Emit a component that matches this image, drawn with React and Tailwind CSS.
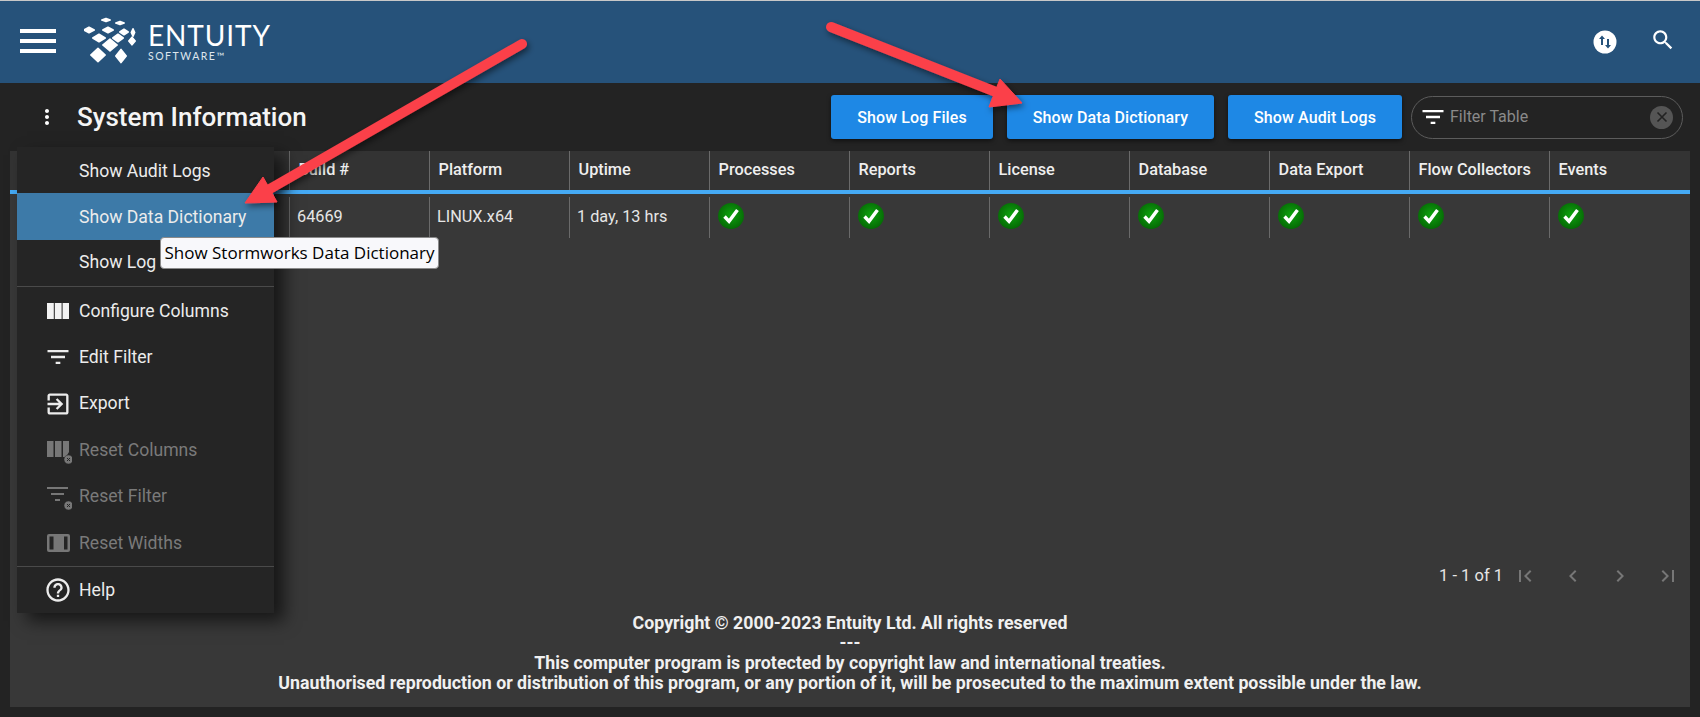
import React from 'react'

const roboto = 'font-["Roboto",sans-serif]'

const Mui = ({ d, className }) => (
  <svg viewBox="0 0 24 24" fill="currentColor" className={className}>
    <path d={d} />
  </svg>
)

const FILTER = 'M10 18h4v-2h-4v2zM3 6v2h18V6H3zm3 7h12v-2H6v2z'
const EXPORT = 'M10.09 15.59L11.5 17l5-5-5-5-1.41 1.41L12.67 11H3v2h9.67l-2.58 2.59zM19 3H5c-1.11 0-2 .9-2 2v4h2V5h14v14H5v-4H3v4c0 1.1.89 2 2 2h14c1.1 0 2-.9 2-2V5c0-1.1-.9-2-2-2z'
const HELP = 'M11 18h2v-2h-2v2zm1-16C6.48 2 2 6.48 2 12s4.48 10 10 10 10-4.48 10-10S17.52 2 12 2zm0 18c-4.41 0-8-3.59-8-8s3.59-8 8-8 8 3.59 8 8-3.59 8-8 8zm0-14c-2.21 0-4 1.79-4 4h2c0-1.1.9-2 2-2s2 .9 2 2c0 2-3 1.75-3 5h2c0-2.25 3-2.5 3-5 0-2.21-1.79-4-4-4z'
const SEARCH = 'M15.5 14h-.79l-.28-.27C15.41 12.59 16 11.11 16 9.5 16 5.91 13.09 3 9.5 3S3 5.91 3 9.5 5.91 16 9.5 16c1.61 0 3.09-.59 4.23-1.57l.27.28v.79l5 4.99L20.49 19l-4.99-5zm-6 0C7.01 14 5 11.99 5 9.5S7.01 5 9.5 5 14 7.01 14 9.5 11.99 14 9.5 14z'
const KEBAB = 'M12 8c1.1 0 2-.9 2-2s-.9-2-2-2-2 .9-2 2 .9 2 2 2zm0 2c-1.1 0-2 .9-2 2s.9 2 2 2 2-.9 2-2-.9-2-2-2zm0 6c-1.1 0-2 .9-2 2s.9 2 2 2 2-.9 2-2-.9-2-2-2z'

const Badge = () => (
  <g>
    <circle cx="24.5" cy="23.5" r="4.500" fill="#777" stroke="#252525" strokeWidth="0.5" />
    <path d="M23 22l3 3M26 22l-3 3" stroke="#252525" strokeWidth="1" />
  </g>
)

const ColumnsIcon = () => (
  <svg viewBox="0 0 28 28" className="w-7 h-7" fill="#f2f2f2">
    <path d="M3 6h6.800v16H3zM10.800 6h6.800v16h-6.800zM18.600 6h6.400v16h-6.400z" />
  </svg>
)

const ResetColumnsIcon = () => (
  <svg viewBox="0 0 28 28" className="w-7 h-7">
    <path d="M3 5h6.500v16H3zM11 5h6.500v16H11zM19 5h6v11l-3 5h-3z" fill="#777" />
    <Badge />
  </svg>
)

const ResetFilterIcon = () => (
  <svg viewBox="0 0 28 28" className="w-7 h-7">
    <path d="M3 5h21v2H3zM7 11h13v2H7zM11 17h5v2h-5z" fill="#777" />
    <Badge />
  </svg>
)

const ResetWidthsIcon = () => (
  <svg viewBox="0 0 28 28" className="w-7 h-7">
    <rect x="3" y="5" width="23" height="18" rx="2" fill="#777" />
    <path d="M5.500 7.500h4v13h-4zM20 7.500h3.500v13H20z" fill="#252525" />
  </svg>
)

const Check = () => (
  <svg viewBox="0 0 26 26" className="w-[28px] h-[28px]">
    <defs>
      <radialGradient id="okGrad" cx="50%" cy="45%" r="55%">
        <stop offset="0%" stopColor="#0ea30e" />
        <stop offset="100%" stopColor="#056a05" />
      </radialGradient>
    </defs>
    <circle cx="13" cy="13" r="12" fill="url(#okGrad)" />
    <path d="M7 13.500l4.200 4.500 7.800-10.500" fill="none" stroke="#fff" strokeWidth="3.200" />
  </svg>
)

const Logo = () => {
  // each mark: centre, half width, half height
  const marks = [
    [106, 21, 5, 2.4], [120, 24, 5, 2.4], [89, 31, 6, 3.6], [108, 31, 6, 3.6], [124, 33, 5, 3.6],
    [99, 39, 7, 4.6], [118, 39, 6, 4.6], [133, 33.500, 2.500, 4.5], [132, 42, 4, 4.6],
    [110, 46, 8, 6.6], [98, 56, 8, 7.4], [121, 57, 6, 7.4],
  ]
  return (
    <div className="flex items-start">
      <svg viewBox="84 16 54 52" className="w-[54px] h-[52px] shrink-0" fill="#fff" stroke="#fff" strokeWidth="1.600" strokeLinejoin="round">
        {marks.map(([x, y, w, h]) => (
          <path key={`${x}-${y}`} d={`M${x - w + 0.8} ${y}L${x} ${y - h + 0.8}L${x + w - 0.8} ${y}L${x} ${y + h - 0.8}Z`} />
        ))}
      </svg>
      <div className="ml-[10px] flex flex-col text-white font-['Lato',sans-serif]">
        <span className="text-[28px] leading-[28px] font-normal mt-[6px] tracking-[0.9px]">ENTUITY</span>
        <span className="text-[10.500px] leading-[12px] mt-[1px] tracking-[1.500px] text-[#dfe7ee]">SOFTWARE™</span>
      </div>
    </div>
  )
}

const Header = () => (
  <header className="h-[82px] shrink-0 bg-[#26527a] flex items-center pl-[20px] pr-[24px]">
    <div className="flex flex-col gap-[5.500px] w-[36px] -mt-[2px]">
      <span className="h-[4.500px] bg-white" />
      <span className="h-[4.500px] bg-white" />
      <span className="h-[4.500px] bg-white" />
    </div>
    <div className="ml-[28px] -mt-[2px]"><Logo /></div>
    <div className="ml-auto flex items-center gap-[33px]">
      <svg viewBox="0 0 24 24" className="w-[24px] h-[24px]">
        <circle cx="12" cy="12" r="11.500" fill="#fff" />
        <path d="M9 5.500l-3 3.500h2v6h2V9h2zM15 18.500l3-3.500h-2V9h-2v6h-2z" fill="#26527a" />
      </svg>
      <Mui d={SEARCH} className="w-[26px] h-[26px] text-white -mt-[4px]" />
    </div>
  </header>
)

const Toolbar = () => (
  <div className="h-[68px] shrink-0 flex items-center pl-[35px] pr-[17px]">
    <Mui d={KEBAB} className="w-6 h-6 text-white" />
    <h1 className="ml-[18px] text-[26px] leading-[32px] font-medium text-[#f5f5f5]">System Information</h1>
    <div className="ml-auto flex items-center">
      <button className="w-[162px] h-[44px] pt-[1px] rounded-[3px] bg-[#1e88e5] text-white text-[16px] tracking-[0.12px] font-medium shadow-[0_2px_4px_rgba(0,0,0,0.5)]">Show Log Files</button>
      <button className="ml-[14px] w-[207px] h-[44px] pt-[1px] rounded-[3px] bg-[#1e88e5] text-white text-[16px] tracking-[0.12px] font-medium shadow-[0_2px_4px_rgba(0,0,0,0.5)]">Show Data Dictionary</button>
      <button className="ml-[14px] w-[174px] h-[44px] pt-[1px] rounded-[3px] bg-[#1e88e5] text-white text-[16px] tracking-[0.12px] font-medium shadow-[0_2px_4px_rgba(0,0,0,0.5)]">Show Audit Logs</button>
      <div className="ml-[9px] w-[272px] h-[43px] rounded-full border border-[#5c5c5c] flex items-center pl-[7px] pr-[9px]">
        <Mui d={FILTER} className="w-[28px] h-[28px] text-white" />
        <span className="ml-[3px] text-[16px] text-[#8a8a8a]">Filter Table</span>
        <span className="ml-auto w-[23px] h-[23px] rounded-full bg-[#555] flex items-center justify-center">
          <svg viewBox="0 0 12 12" className="w-[12px] h-[12px]">
            <path d="M1.500 1.500l9 9M10.500 1.500l-9 9" stroke="#222" strokeWidth="1.600" />
          </svg>
        </span>
      </div>
    </div>
  </div>
)

const columns = ['Server', 'Build #', 'Platform', 'Uptime', 'Processes', 'Reports', 'License', 'Database', 'Data Export', 'Flow Collectors', 'Events']
const gridCols = 'grid grid-cols-[279px_repeat(9,140px)_1fr]'

const Table = () => (
  <>
    <div className={`${gridCols} h-[39px] bg-[#333333] items-center`}>
      {columns.map((c, i) => (
        <div key={c} className={`h-full flex items-center text-[16.300px] font-medium text-[#eeeeee] pl-[8.500px] ${i > 0 ? 'border-l border-[#6a6a6a]' : ''}`}>{c}</div>
      ))}
    </div>
    <div className="h-[4px] bg-[#45aaf5]" />
    <div className={`${gridCols} pt-[3px] h-[44px]`}>
      <div />
      <div className="border-l border-[#6a6a6a] pl-[7px] pb-[1px] flex items-center text-[16.300px] text-[#e6e6e6]">64669</div>
      <div className="border-l border-[#6a6a6a] pl-[7px] pb-[1px] flex items-center text-[16.300px] text-[#e6e6e6]">LINUX.x64</div>
      <div className="border-l border-[#6a6a6a] pl-[7px] pb-[1px] flex items-center text-[16.300px] text-[#e6e6e6]">1 day, 13 hrs</div>
      {columns.slice(4).map((c) => (
        <div key={c} className="border-l border-[#6a6a6a] pl-[7px] pb-[3px] flex items-center"><Check /></div>
      ))}
    </div>
  </>
)

const Pagination = () => (
  <div className="flex items-center justify-end h-[24px] pr-[10px] text-[#777777]">
    <span className="text-[16.500px] text-[#e6e6e6] mr-[10px]">1 - 1 of 1</span>
    <Mui d="M18.41 16.59L13.82 12l4.59-4.59L17 6l-6 6 6 6zM6 6h2v12H6z" className="w-6 h-6" />
    <Mui d="M15.41 7.41L14 6l-6 6 6 6 1.41-1.41L10.83 12z" className="w-6 h-6 ml-[23.500px]" />
    <Mui d="M10 6L8.59 7.41 13.17 12l-4.58 4.59L10 18l6-6z" className="w-6 h-6 ml-[23.500px]" />
    <Mui d="M5.59 7.41L10.18 12l-4.59 4.59L7 18l6-6-6-6zM16 6h2v12h-2z" className="w-6 h-6 ml-[24px]" />
  </div>
)

const Footer = () => (
  <div className="mt-[25px] text-center text-[17.750px] leading-[20px] font-bold text-[#f0f0f0]">
    <p>Copyright © 2000-2023 Entuity Ltd. All rights reserved</p>
    <p>---</p>
    <p>This computer program is protected by copyright law and international treaties.</p>
    <p>Unauthorised reproduction or distribution of this program, or any portion of it, will be prosecuted to the maximum extent possible under the law.</p>
  </div>
)

const MenuItem = ({ icon, label, active, disabled, tucked }) => (
  <div className={`h-[46.400px] flex items-center pl-[27px] text-[17.600px] ${tucked ? 'pb-[2px]' : 'pt-[1px]'} ${active ? 'bg-[#3d7aa8]' : ''} ${disabled ? 'text-[#7a7a7a]' : 'text-[#ececec]'}`}>
    <span className="w-[28px] h-[28px] shrink-0 mr-[7px]">{icon}</span>
    <span className="whitespace-nowrap">{label}</span>
  </div>
)

const Menu = () => (
  <div className="absolute left-[17px] top-[147px] w-[257px] bg-[#252525] shadow-[10px_8px_16px_rgba(0,0,0,0.6)]">
    <MenuItem label="Show Audit Logs" />
    <MenuItem label="Show Data Dictionary" active />
    <MenuItem label="Show Log Files" tucked />
    <div className="h-px bg-[#4a4a4a]" />
    <MenuItem label="Configure Columns" icon={<ColumnsIcon />} />
    <MenuItem label="Edit Filter" icon={<Mui d={FILTER} className="w-7 h-7" />} />
    <MenuItem label="Export" icon={<Mui d={EXPORT} className="w-7 h-7" />} />
    <MenuItem label="Reset Columns" icon={<ResetColumnsIcon />} disabled />
    <MenuItem label="Reset Filter" icon={<ResetFilterIcon />} disabled />
    <MenuItem label="Reset Widths" icon={<ResetWidthsIcon />} disabled />
    <div className="h-px bg-[#4a4a4a]" />
    <MenuItem label="Help" icon={<Mui d={HELP} className="w-7 h-7" />} />
  </div>
)

const Tooltip = () => (
  <div className="absolute left-[160px] top-[237px] w-[279px] h-[32px] rounded-[4px] border border-[#8a8a8a] bg-[#f8f8fb] text-black text-[17px] leading-[29px] text-center whitespace-nowrap font-['Open_Sans',sans-serif]">
    Show Stormworks Data Dictionary
  </div>
)

// the red call-out arrows sit over the whole page
const Arrows = () => (
  <svg className="absolute inset-0 w-[1700px] h-[717px] pointer-events-none" viewBox="0 0 1700 717">
    <defs>
      <filter id="arrowShadow" x="-10%" y="-10%" width="120%" height="120%">
        <feDropShadow dx="2" dy="3" stdDeviation="3" floodColor="#000" floodOpacity="0.5" />
      </filter>
    </defs>
    <g filter="url(#arrowShadow)" fill="#fb4049" stroke="#fb4049">
      <path d="M522 44L268 190" strokeWidth="10" strokeLinecap="round" fill="none" />
      <path d="M245 203L263 177L277 202Z" strokeWidth="1" strokeLinejoin="round" />
      <path d="M831 27L996 92" strokeWidth="10" strokeLinecap="round" fill="none" />
      <path d="M1022 103L1000 79L989 107Z" strokeWidth="1" strokeLinejoin="round" />
    </g>
  </svg>
)

export default function App() {
  return (
    <div className={`relative w-[1700px] h-[717px] overflow-hidden flex flex-col bg-[#232323] ${roboto}`}>
      <div className="h-px shrink-0 bg-[#c8c8c8]" />
      <Header />
      <Toolbar />
      <main className="flex-1 mx-[10px] mb-[10px] bg-[#383838] flex flex-col min-h-0">
        <Table />
        <div className="flex-1" />
        <Pagination />
        <Footer />
        <div className="h-[14px]" />
      </main>
      <Menu />
      <Tooltip />
      <Arrows />
    </div>
  )
}
